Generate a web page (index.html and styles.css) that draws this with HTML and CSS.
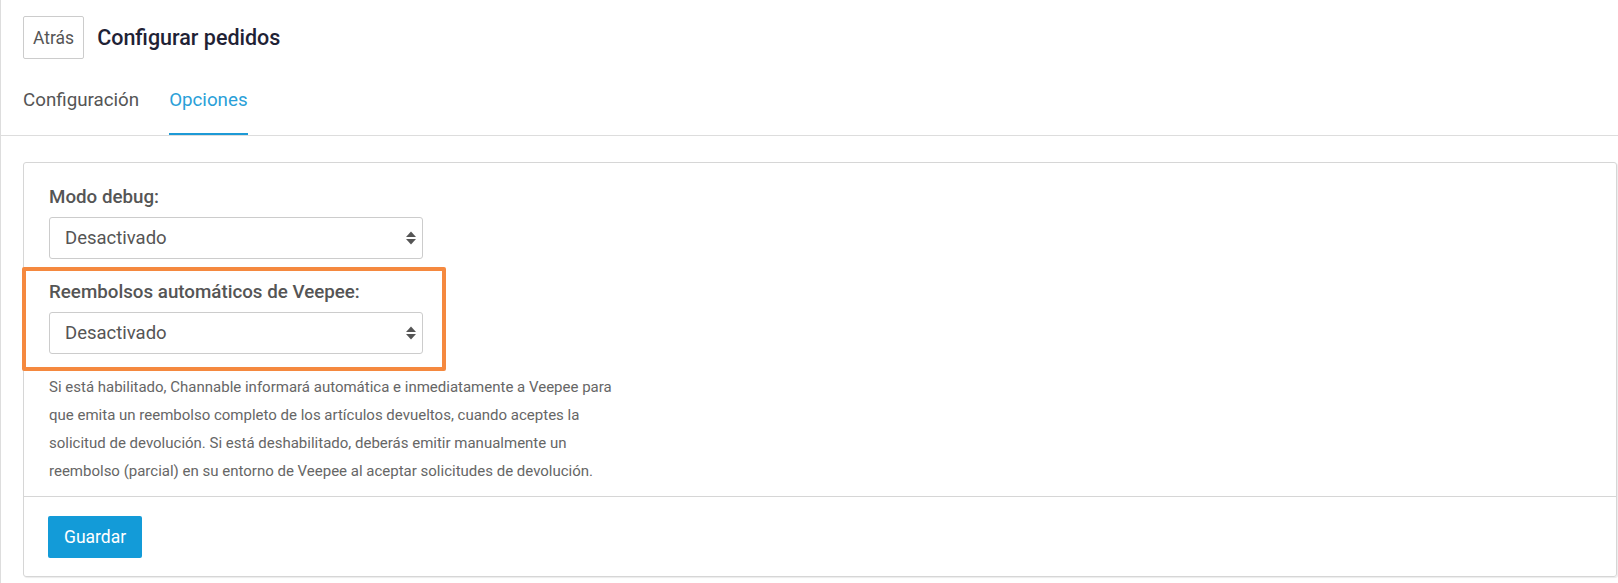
FILE: index.html
```html
<!DOCTYPE html>
<html lang="es">
<head>
  <meta charset="UTF-8">
  <title>Configurar pedidos</title>
  <link rel="stylesheet" href="styles.css">
</head>
<body>
  <div class="page">
    <div class="header">
      <button class="btn-back">Atrás</button>
      <h1 class="title">Configurar pedidos</h1>
    </div>

    <div class="tabs">
      <span class="tab">Configuración</span>
      <span class="tab active">Opciones</span>
    </div>

    <div class="card">
      <div class="card-body">
        <div class="form-group">
          <label class="label">Modo debug:</label>
          <div class="select">
            <span>Desactivado</span>
            <svg class="arrows" width="10" height="14" viewBox="0 0 10 14">
              <path d="M0 6 L5 0.5 L10 6 Z" fill="#555"/>
              <path d="M0 8 L5 13.5 L10 8 Z" fill="#555"/>
            </svg>
          </div>
        </div>

        <div class="form-group highlight">
          <label class="label">Reembolsos automáticos de Veepee:</label>
          <div class="select">
            <span>Desactivado</span>
            <svg class="arrows" width="10" height="14" viewBox="0 0 10 14">
              <path d="M0 6 L5 0.5 L10 6 Z" fill="#555"/>
              <path d="M0 8 L5 13.5 L10 8 Z" fill="#555"/>
            </svg>
          </div>
        </div>

        <p class="help">Si está habilitado, Channable informará automática e inmediatamente a Veepee para que emita un reembolso completo de los artículos devueltos, cuando aceptes la solicitud de devolución. Si está deshabilitado, deberás emitir manualmente un reembolso (parcial) en su entorno de Veepee al aceptar solicitudes de devolución.</p>
      </div>

      <div class="card-footer">
        <button class="btn-save">Guardar</button>
      </div>
    </div>
  </div>
</body>
</html>
```

FILE: styles.css
```css
* {
  margin: 0;
  padding: 0;
  box-sizing: border-box;
}

body, html {
  height: 100%;
  overflow: hidden;
  background: #fff;
  font-family: Roboto, "Liberation Sans", Arial, sans-serif;
}

.page {
  height: 100%;
  border-left: 1px solid #ddd;
}

.header {
  display: flex;
  align-items: center;
  gap: 13px;
  padding: 16px 0 0 22px;
}

.btn-back {
  height: 43px;
  padding: 0 9px;
  border: 1px solid #ccc;
  border-radius: 2px;
  background: #fff;
  color: #555;
  font-family: inherit;
  font-size: 17.5px;
}

.title {
  font-size: 21.5px;
  line-height: 26px;
  font-weight: 500;
  color: #1f2235;
}

.tabs {
  display: flex;
  gap: 30px;
  margin-top: 17px;
  padding-left: 22px;
  border-bottom: 1px solid #ddd;
}

.tab {
  padding: 13px 0 22px;
  font-size: 18.75px;
  line-height: 22px;
  color: #555;
  border-bottom: 2px solid transparent;
}

.tab.active {
  color: #2a9fd8;
  border-bottom-color: #1d9ad6;
}

.card {
  margin: 26px 1px 0 22px;
  border: 1px solid #d6d6d6;
  border-radius: 3px;
  box-shadow: 1px 1px 1px rgba(0, 0, 0, 0.08);
}

.card-body {
  padding: 23px 25px 11px;
}

.form-group {
  width: 374px;
  margin-bottom: 22px;
}

.form-group.highlight {
  position: relative;
  margin-bottom: 19px;
}

.highlight::after {
  content: "";
  position: absolute;
  top: -14px;
  left: -27px;
  right: -23px;
  bottom: -17px;
  border: 4px solid #f5893f;
  border-radius: 2px;
}

.label {
  display: block;
  margin-bottom: 9px;
  font-size: 18.75px;
  line-height: 22px;
  font-weight: 500;
  color: #555;
}

.select {
  display: flex;
  align-items: center;
  justify-content: space-between;
  height: 42px;
  padding: 0 6px 0 15px;
  border: 1px solid #ccc;
  border-radius: 3px;
  background: #fff;
  color: #555;
  font-size: 18.5px;
}

.help {
  max-width: 575px;
  font-size: 15px;
  line-height: 28px;
  color: #666;
}

.card-footer {
  padding: 19px 24px 18px;
  border-top: 1px solid #d6d6d6;
}

.btn-save {
  height: 42px;
  padding: 0 16px;
  border: none;
  border-radius: 2px;
  background: #139bd8;
  color: #fff;
  font-family: inherit;
  font-size: 17.5px;
}
```
